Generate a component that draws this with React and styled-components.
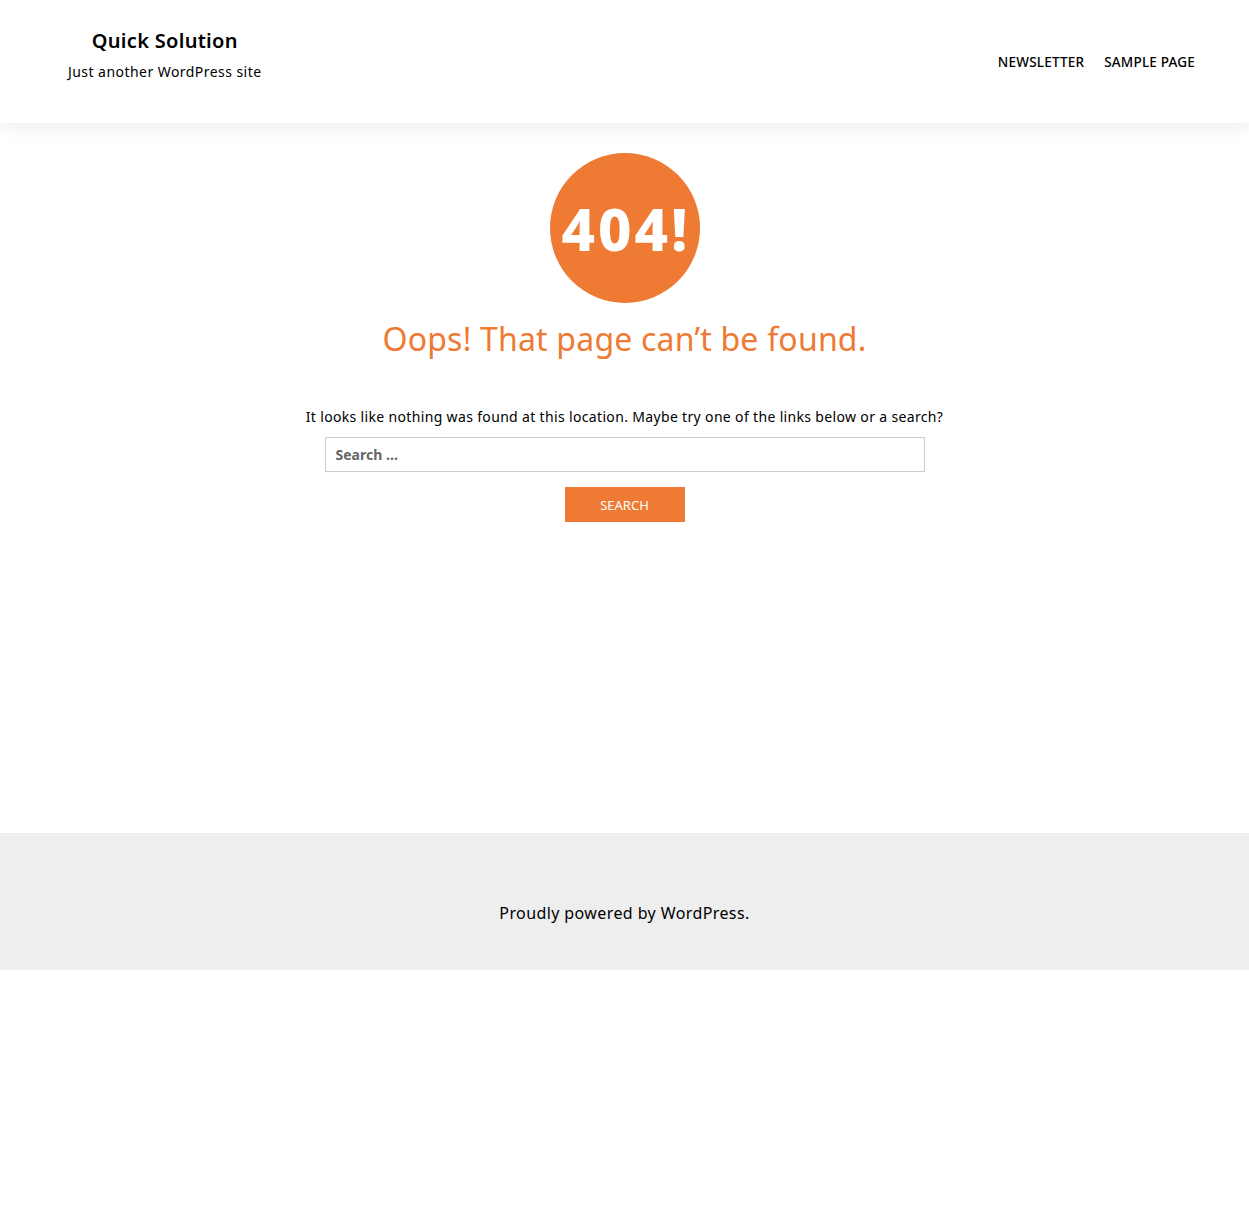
import React from "react";
import styled, { createGlobalStyle } from "styled-components";

const GlobalStyle = createGlobalStyle`
  * { box-sizing: border-box; }
  body {
    margin: 0;
    font-family: "Noto Sans", "Liberation Sans", sans-serif;
    color: #000;
    background: #fff;
  }
`;

const ORANGE = "#ee7a34";

const Header = styled.header`
  height: 123px;
  display: flex;
  align-items: center;
  justify-content: space-between;
  padding: 0 54px 0 68px;
  background: #fff;
  box-shadow: 0 4px 16px rgba(0, 0, 0, 0.08);
  position: relative;
  z-index: 1;
`;

const Branding = styled.div`
  display: flex;
  flex-direction: column;
  align-items: center;
  margin-top: -12px;
`;

const SiteTitle = styled.a`
  font-size: 20px;
  font-weight: 600;
  letter-spacing: 0.3px;
  color: #000;
  text-decoration: none;
  line-height: 1.2;
`;

const Tagline = styled.p`
  margin: 9px 0 0;
  font-size: 14px;
  letter-spacing: 0.45px;
  line-height: 1.4;
`;

const Nav = styled.nav`
  display: flex;
  gap: 20px;
`;

const NavLink = styled.a`
  font-size: 13.5px;
  font-weight: 500;
  letter-spacing: 0.2px;
  text-transform: uppercase;
  color: #000;
  text-decoration: none;
`;

const Main = styled.main`
  height: 710px;
  padding-top: 30px;
  display: flex;
  flex-direction: column;
  align-items: center;
`;

const Badge = styled.div`
  width: 150px;
  height: 150px;
  border-radius: 50%;
  background: ${ORANGE};
  display: flex;
  align-items: center;
  justify-content: center;
  color: #fff;
  font-size: 58px;
  font-weight: 800;
  letter-spacing: 3px;
  padding-left: 3px;
`;

const Title = styled.h1`
  margin: 16px 0 0;
  font-size: 32px;
  font-weight: 400;
  letter-spacing: 0.2px;
  color: ${ORANGE};
  line-height: 40px;
`;

const Text = styled.p`
  margin: 46px 0 0;
  font-size: 14px;
  letter-spacing: 0.34px;
  line-height: 24px;
`;

const SearchForm = styled.form`
  display: flex;
  flex-direction: column;
  align-items: center;
  gap: 15px;
  margin-top: 8px;
`;

const SearchInput = styled.input`
  width: 600px;
  height: 35px;
  border: 1px solid #ccc;
  padding: 0 10px;
  font-family: inherit;
  font-size: 14px;
  outline: none;
  &::placeholder {
    color: #666;
    font-weight: 700;
  }
`;

const SearchButton = styled.button`
  width: 120px;
  height: 35px;
  border: none;
  background: ${ORANGE};
  color: #fff;
  font-family: inherit;
  font-size: 13px;
  text-transform: uppercase;
`;

const Footer = styled.footer`
  height: 137px;
  background: #eeeeee;
  display: flex;
  align-items: center;
  justify-content: center;
  padding-top: 22px;
  font-size: 16px;
  letter-spacing: 0.4px;
`;

export default function App() {
  return (
    <>
      <GlobalStyle />
      <Header>
        <Branding>
          <SiteTitle href="#">Quick Solution</SiteTitle>
          <Tagline>Just another WordPress site</Tagline>
        </Branding>
        <Nav>
          <NavLink href="#">Newsletter</NavLink>
          <NavLink href="#">Sample Page</NavLink>
        </Nav>
      </Header>
      <Main>
        <Badge>404!</Badge>
        <Title>Oops! That page can’t be found.</Title>
        <Text>
          It looks like nothing was found at this location. Maybe try one of
          the links below or a search?
        </Text>
        <SearchForm onSubmit={(e) => e.preventDefault()}>
          <SearchInput type="search" placeholder="Search …" />
          <SearchButton type="submit">Search</SearchButton>
        </SearchForm>
      </Main>
      <Footer>Proudly powered by WordPress.</Footer>
    </>
  );
}
